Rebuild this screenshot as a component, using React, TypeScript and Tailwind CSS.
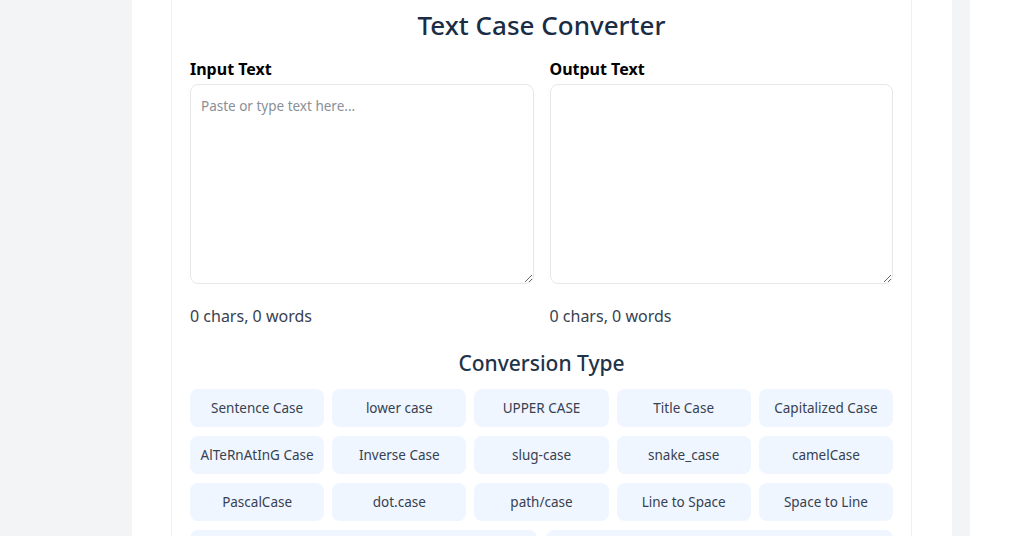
const conversions = [
	'Sentence Case',
	'lower case',
	'UPPER CASE',
	'Title Case',
	'Capitalized Case',
	'AlTeRnAtInG Case',
	'Inverse Case',
	'slug-case',
	'snake_case',
	'camelCase',
	'PascalCase',
	'dot.case',
	'path/case',
	'Line to Space',
	'Space to Line',
];

function TextPanel({ label, placeholder }: { label: string; placeholder?: string }) {
	return (
		<div className="flex flex-col">
			<label className="text-[16px] font-bold leading-[22px] text-black">{label}</label>
			<textarea
				placeholder={placeholder}
				className="mt-[4px] h-[200px] w-full resize-y rounded-lg border border-[#e5e7eb] bg-white px-[10px] py-[11px] text-[13.5px] leading-[20px] text-gray-800 placeholder:text-[#8a8f98] focus:outline-none"
			/>
			<div className="mt-[21px] text-[16px] leading-[22px] text-[#374151]">0 chars, 0 words</div>
		</div>
	);
}

export default function App() {
	return (
		<div
			className="flex h-[536px] w-full overflow-hidden bg-[#f3f4f6]"
			style={{ fontFamily: '"Noto Sans", "Open Sans", sans-serif' }}>
			<div className="w-[132px] shrink-0" />
			<div className="w-[820px] shrink-0 bg-white pl-[39px] pr-[40px]">
				<div className="-mt-[10px] rounded-b-lg border border-t-0 border-[#f0f1f3] px-[18px] pt-[16px]">
					<h1 className="text-center text-[26px] font-medium leading-[38px] text-[#1b2d45]">
						Text Case Converter
					</h1>
					<div className="mt-[14px] grid grid-cols-2 gap-[16px]">
						<TextPanel label="Input Text" placeholder="Paste or type text here..." />
						<TextPanel label="Output Text" />
					</div>
					<h2 className="mt-[21px] text-center text-[21px] font-medium leading-[30px] text-[#1f3349]">
						Conversion Type
					</h2>
					<div className="mt-[11px] grid grid-cols-5 gap-x-[8px] gap-y-[9px]">
						{conversions.map((c) => (
							<button
								key={c}
								className="h-[38px] rounded-lg bg-[#eff6ff] text-[13.5px] text-[#374151]">
								{c}
							</button>
						))}
					</div>
					<div className="mt-[9px] grid grid-cols-2 gap-[9px]">
						<button aria-label="Copy output" className="h-[46px] rounded-lg bg-[#eff6ff]" />
						<button aria-label="Clear" className="h-[46px] rounded-lg bg-[#eff6ff]" />
					</div>
				</div>
			</div>
			<div className="w-[18px] shrink-0" />
			<div className="flex-1 bg-white" />
		</div>
	);
}
